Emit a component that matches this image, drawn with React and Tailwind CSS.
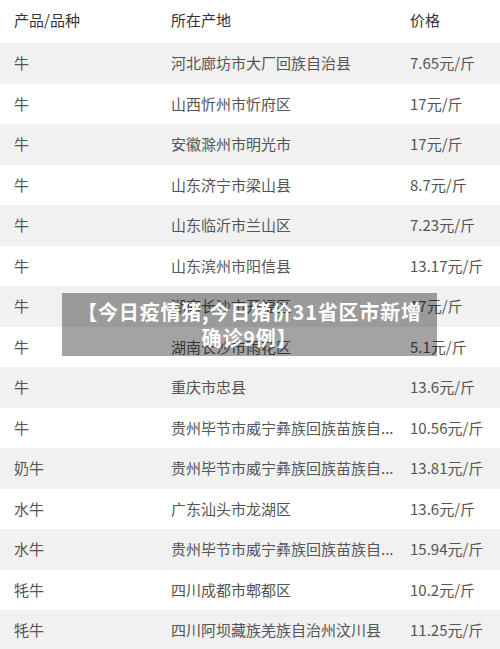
const rows = [
  ["牛", "河北廊坊市大厂回族自治县", "7.65元/斤"],
  ["牛", "山西忻州市忻府区", "17元/斤"],
  ["牛", "安徽滁州市明光市", "17元/斤"],
  ["牛", "山东济宁市梁山县", "8.7元/斤"],
  ["牛", "山东临沂市兰山区", "7.23元/斤"],
  ["牛", "山东滨州市阳信县", "13.17元/斤"],
  ["牛", "湖南长沙市开福区", "17元/斤"],
  ["牛", "湖南长沙市雨花区", "5.1元/斤"],
  ["牛", "重庆市忠县", "13.6元/斤"],
  ["牛", "贵州毕节市威宁彝族回族苗族自...", "10.56元/斤"],
  ["奶牛", "贵州毕节市威宁彝族回族苗族自...", "13.81元/斤"],
  ["水牛", "广东汕头市龙湖区", "13.6元/斤"],
  ["水牛", "贵州毕节市威宁彝族回族苗族自...", "15.94元/斤"],
  ["牦牛", "四川成都市郫都区", "10.2元/斤"],
  ["牦牛", "四川阿坝藏族羌族自治州汶川县", "11.25元/斤"],
];

export default function App() {
  return (
    <div
      className="relative w-[500px] h-[649px] overflow-hidden bg-white text-[15px]"
      style={{ fontFamily: '"Noto Sans CJK SC", "Noto Sans", sans-serif' }}
    >
      <div className="flex items-center h-[43px] pb-[3px] text-[#333]">
        <div className="w-[171px] pl-[14px]">产品/品种</div>
        <div className="w-[239px]">所在产地</div>
        <div className="flex-1">价格</div>
      </div>
      {rows.map((r, i) => (
        <div
          key={i}
          className={`flex items-center h-[40.5px] text-[#555] ${
            i % 2 === 0 ? "bg-[#f1f1f1]" : "bg-white"
          }`}
        >
          <div className="w-[171px] pl-[14px]">{r[0]}</div>
          <div className="w-[239px] pr-[10px] whitespace-nowrap overflow-hidden">{r[1]}</div>
          <div className="flex-1 whitespace-nowrap">{r[2]}</div>
        </div>
      ))}

      {/* caption overlay */}
      <div className="absolute left-[62px] top-[293px] w-[375px] h-[63px] bg-black/[0.36] flex items-center justify-center">
        <p className="text-white font-bold text-[20px] leading-[26px] tracking-[0.8px] text-center whitespace-nowrap">
          【今日疫情猪,今日猪价31省区市新增
          <br />
          确诊9例】
        </p>
      </div>
    </div>
  );
}
